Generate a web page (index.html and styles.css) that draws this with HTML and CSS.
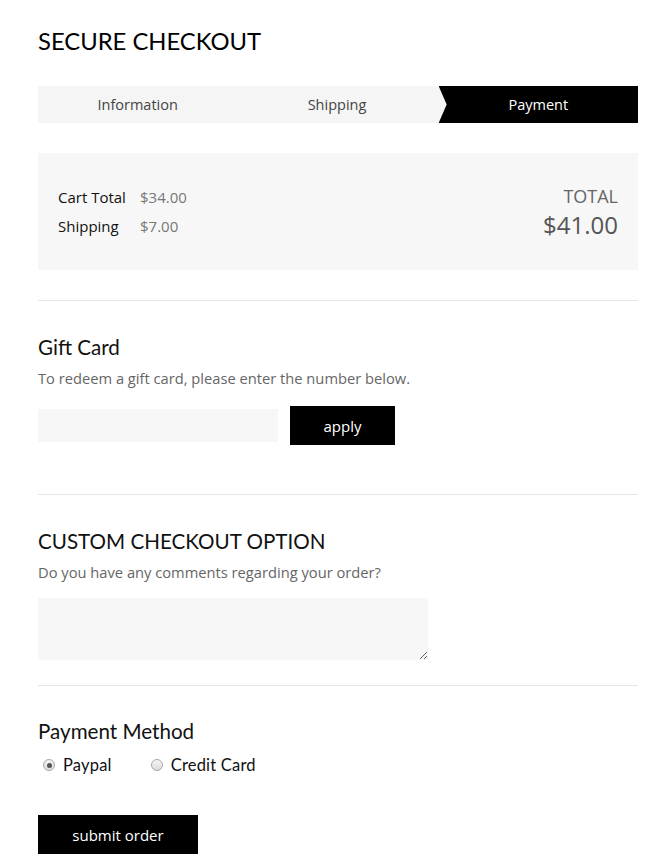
FILE: index.html
```html
<!DOCTYPE html>
<html>
<head>
<meta charset="utf-8">
<link rel="stylesheet" href="styles.css">
</head>
<body>
<div class="page">
  <h1 class="title">SECURE CHECKOUT</h1>
  <div class="steps">
    <div class="step">Information</div>
    <div class="step">Shipping</div>
    <div class="step active">Payment</div>
  </div>
  <div class="summary">
    <div class="lines">
      <div class="line"><span class="label">Cart Total</span><span class="val">$34.00</span></div>
      <div class="line"><span class="label">Shipping</span><span class="val">$7.00</span></div>
    </div>
    <div class="total">
      <div class="total-label">TOTAL</div>
      <div class="total-val">$41.00</div>
    </div>
  </div>
  <hr class="sep">
  <section class="sec gift">
    <h2 class="heading">Gift Card</h2>
    <p class="desc">To redeem a gift card, please enter the number below.</p>
    <div class="gift-row">
      <input class="gift-input" type="text">
      <button class="btn apply">apply</button>
    </div>
  </section>
  <hr class="sep">
  <section class="sec custom">
    <h2 class="heading">CUSTOM CHECKOUT OPTION</h2>
    <p class="desc">Do you have any comments regarding your order?</p>
    <textarea class="comments"></textarea>
  </section>
  <hr class="sep sep-tight">
  <section class="sec pay">
    <h2 class="heading">Payment Method</h2>
    <div class="radios">
      <label class="radio"><input type="radio" name="pm" checked> Paypal</label>
      <label class="radio"><input type="radio" name="pm"> Credit Card</label>
    </div>
    <button class="btn submit">submit order</button>
  </section>
</div>
</body>
</html>
```
FILE: styles.css
```css
* { box-sizing: border-box; }
body {
  margin: 0;
  background: #fff;
  font-family: "Open Sans", "Noto Sans", sans-serif;
  color: #000;
}
.page {
  width: 600px;
  margin-left: 38px;
  padding-top: 26px;
}
.title {
  margin: 0;
  font-family: "Lato", sans-serif;
  font-weight: 400;
  font-size: 23.8px;
  line-height: 30px;
}
.steps {
  display: flex;
  margin-top: 30px;
  height: 37px;
  background: #f5f5f5;
}
.step {
  flex: 1;
  display: flex;
  align-items: center;
  justify-content: center;
  font-size: 14.5px;
  color: #444;
}
.step.active {
  background: #000;
  color: #fff;
  margin-left: 2px;
  clip-path: polygon(0 0, 100% 0, 100% 100%, 0 100%, 8px 50%);
}
.summary {
  margin-top: 30px;
  background: #f7f7f7;
  height: 117px;
  padding: 30px 20px 0 20px;
  display: flex;
  justify-content: space-between;
}
.line {
  display: flex;
  font-size: 15px;
  line-height: 29px;
}
.label { width: 82px; color: #111; }
.val { color: #777; }
.total { text-align: right; }
.total-label {
  font-size: 18px;
  color: #666;
  line-height: 26px;
}
.total-val {
  font-size: 24px;
  color: #555;
  line-height: 32px;
}
.sep {
  margin: 30px 0 0 0;
  border: 0;
  border-top: 1px solid #e6e6e6;
  height: 0;
}
.sep-tight { margin-top: 25px; }
.sec { padding-top: 33px; }
.heading {
  margin: 0;
  font-family: "Lato", sans-serif;
  font-weight: 400;
  font-size: 20.6px;
  line-height: 26px;
  color: #111;
}
.desc {
  margin: 8px 0 0 0;
  font-size: 14.7px;
  line-height: 20px;
  color: #666;
}
.gift-row {
  display: flex;
  align-items: center;
  gap: 12px;
  margin-top: 18px;
}
.gift-input {
  width: 240px;
  height: 33px;
  border: 0;
  background: #f7f7f7;
  margin: 0;
}
.btn {
  background: #000;
  color: #fff;
  border: 0;
  font-family: "Open Sans", "Noto Sans", sans-serif;
  font-size: 15px;
  cursor: pointer;
}
.apply { width: 105px; height: 39px; }
.gift { padding-bottom: 19px; }
.comments {
  display: block;
  margin-top: 16px;
  width: 390px;
  height: 62px;
  border: 0;
  background: #f7f7f7;
}
.pay { padding-top: 32px; }
.radios {
  display: flex;
  gap: 34px;
  margin-top: 11px;
  font-family: "Lato", sans-serif;
  font-size: 16.5px;
  letter-spacing: 0.2px;
  color: #111;
}
.radio { display: flex; align-items: center; gap: 8px; }
.radio input {
  appearance: none;
  -webkit-appearance: none;
  margin: 0 0 0 5px;
  width: 12px;
  height: 12px;
  border-radius: 50%;
  border: 1px solid #a9a9a9;
  background: linear-gradient(#f4f4f4, #dcdcdc);
  position: relative;
}
.radio input:checked::after {
  content: "";
  position: absolute;
  left: 2.5px;
  top: 2.5px;
  width: 5px;
  height: 5px;
  border-radius: 50%;
  background: #555;
}
.submit {
  display: block;
  margin-top: 40px;
  width: 160px;
  height: 39px;
}
```
